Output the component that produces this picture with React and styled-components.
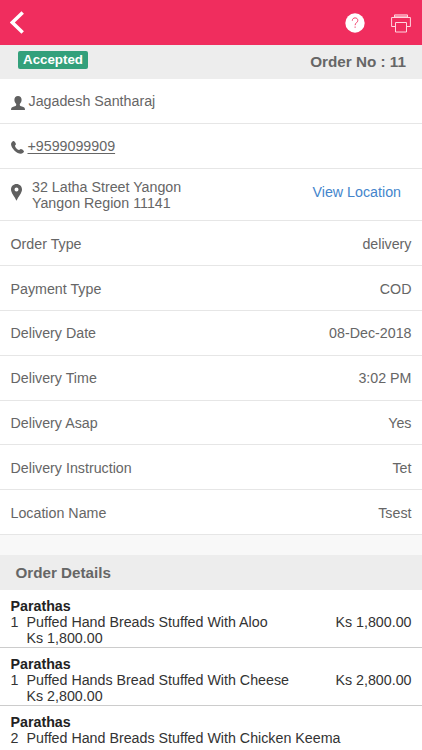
import React from "react";
import styled, { createGlobalStyle } from "styled-components";

const info = [
  ["Order Type", "delivery"],
  ["Payment Type", "COD"],
  ["Delivery Date", "08-Dec-2018"],
  ["Delivery Time", "3:02 PM"],
  ["Delivery Asap", "Yes"],
  ["Delivery Instruction", "Tet"],
  ["Location Name", "Tsest"],
];

const items = [
  { group: "Parathas", qty: 1, name: "Puffed Hand Breads Stuffed With Aloo", price: "Ks 1,800.00" },
  { group: "Parathas", qty: 1, name: "Puffed Hands Bread Stuffed With Cheese", price: "Ks 2,800.00" },
  { group: "Parathas", qty: 2, name: "Puffed Hand Breads Stuffed With Chicken Keema" },
];

const App = () => {
  return (
    <Container>
      <GlobalStyle />
      <Header>
        <BackIcon viewBox="0 0 14 24">
          <path d="M12.7 1.4L2.3 11.5l10.4 10.1" />
        </BackIcon>
        <Actions>
          <HelpIcon viewBox="0 0 20 20">
            <circle cx="10" cy="10" r="9.7" />
            <path d="M7.3 7.7c0-1.8 1.2-2.8 2.8-2.8s2.7 1 2.7 2.5c0 2.3-2.7 2.4-2.7 4.8" />
            <path d="M10.1 13.5v1.3" />
          </HelpIcon>
          <PrintIcon viewBox="0 0 20 19">
            <path d="M3.5 3.5V.9h13v2.6M3.5 2.2h13" />
            <path d="M4.5 12.5H.6v-9h18.8v9h-3.9" />
            <path d="M4.5 8.5h11V18h-11z" />
          </PrintIcon>
        </Actions>
      </Header>
      <StatusBar>
        <Badge>Accepted</Badge>
        <OrderNo>Order No : 11</OrderNo>
      </StatusBar>
      <Row $height={44.8}>
        <UserIcon viewBox="0 0 14 14">
          <path d="M7 0c2.200 0 3.600 1.400 3.600 3.700 0 1.700-.6 3.200-1.800 4.200v1c0 .8.9 1.100 2.200 1.500 2 .6 3 1.100 3 3.600H0c0-2.500 1-3 3-3.600 1.300-.4 2.200-.7 2.200-1.500v-1C4 6.900 3.400 5.400 3.400 3.700 3.400 1.400 4.800 0 7 0z" />
        </UserIcon>
        <span>Jagadesh Santharaj</span>
      </Row>
      <Row $height={44.8}>
        <PhoneIcon viewBox="0 0 13 13">
          <path d="M1 1C1.800.2 2.600-.1 3.100.3c.9.7 1.600 1.900 1.800 2.800.1.800-1 1.100-.9 1.800.3 1.500 2.300 3.600 3.900 4 .8.2 1.200-.9 2-.8.9.1 2.200.9 2.900 1.800.5.700-.1 1.500-1 2.200-1.700 1.500-5.400.4-8.200-2.300C.7 6.800-1.200 3.200 1 1z" />
        </PhoneIcon>
        <Phone href="#">+9599099909</Phone>
      </Row>
      <Row $height={52.8}>
        <PinIcon viewBox="0 0 11 17">
          <path d="M5.500 0C8.600 0 11 2.400 11 5.400c0 3.400-3.500 6.800-5.500 11.300C3.500 12.200 0 8.800 0 5.400 0 2.400 2.400 0 5.500 0zm0 3.500a2 2 0 1 0 0 4 2 2 0 1 0 0-4z" />
        </PinIcon>
        <div>
          32 Latha Street Yangon
          <br />
          Yangon Region 11141
        </div>
        <MapLink href="#">View Location</MapLink>
      </Row>
      {info.map(([label, value]) => (
        <Row key={label} $height={44.8}>
          <span>{label}</span>
          <Value>{value}</Value>
        </Row>
      ))}
      <SectionTitle>Order Details</SectionTitle>
      {items.map((item) => (
        <Item key={item.name}>
          <h4>{item.group}</h4>
          <ItemLine>
            <Qty>{item.qty}</Qty>
            <span>{item.name}</span>
            <Value>{item.price}</Value>
          </ItemLine>
          <UnitPrice>{item.price}</UnitPrice>
        </Item>
      ))}
    </Container>
  );
};

const GlobalStyle = createGlobalStyle`
  * {
    box-sizing: border-box;
  }
  body {
    margin: 0;
    overflow: hidden;
  }
`;
const Container = styled.div`
  width: 100%;
  height: 750px;
  overflow: hidden;
  background-color: #f8f8f8;
  color: #666;
  font-family: "Liberation Sans", Arial, sans-serif;
  font-size: 14.25px;
  line-height: 16px;
`;
const Header = styled.header`
  display: flex;
  justify-content: space-between;
  height: 45px;
  padding: 11px 11px 0 9.5px;
  background-color: #f02d5e;
`;
const Actions = styled.div`
  display: flex;
  gap: 26px;
  padding-top: 2px;
`;
const BackIcon = styled.svg`
  width: 14px;
  height: 24px;
  fill: none;
  stroke: #fff;
  stroke-width: 3.5;
`;
const HelpIcon = styled.svg`
  width: 20px;
  height: 20px;
  fill: none;
  stroke: #f02d5e;
  stroke-width: 0.9;
  circle {
    fill: #fff;
    stroke: none;
  }
`;
const PrintIcon = styled.svg`
  width: 20px;
  height: 19px;
  margin-top: 0.5px;
  fill: #f02d5e;
  stroke: #ffd5df;
  stroke-width: 1;
`;
const StatusBar = styled.div`
  display: flex;
  align-items: flex-start;
  justify-content: space-between;
  height: 34px;
  padding: 6px 16px 0 18px;
  background-color: #ededed;
`;
const Badge = styled.span`
  width: 70px;
  height: 18px;
  border-radius: 2px;
  background-color: #33a07b;
  color: #fff;
  font-size: 13.3px;
  font-weight: bold;
  line-height: 18px;
  text-align: center;
`;
const OrderNo = styled.strong`
  padding-top: 3px;
  font-size: 15.25px;
`;
const Row = styled.div`
  display: flex;
  align-items: center;
  height: ${({ $height }) => $height}px;
  padding: 1px 10.5px 0;
  border-bottom: 1px solid #e6e6e6;
  background-color: #fff;
`;
const Value = styled.span`
  margin-left: auto;
`;
const UserIcon = styled.svg`
  width: 14px;
  height: 14px;
  margin: 4px 4px 0 0;
  fill: #606060;
`;
const PhoneIcon = styled.svg`
  width: 13px;
  height: 13px;
  margin: 3px 4px 0 0;
  fill: #606060;
`;
const Phone = styled.a`
  color: #666;
  text-underline-offset: 2px;
`;
const PinIcon = styled.svg`
  width: 11px;
  height: 17px;
  margin: 0 10.5px 4px 0;
  fill: #606060;
  fill-rule: evenodd;
`;
const MapLink = styled.a`
  margin: 0 10.5px 6px auto;
  color: #4485cc;
  text-decoration: none;
`;
const SectionTitle = styled.h3`
  height: 34.6px;
  margin: 20.4px 0 0;
  padding: 0 15.5px;
  background-color: #ededed;
  font-size: 15.2px;
  line-height: 35px;
`;
const Item = styled.div`
  height: 58px;
  padding: 8.4px 10.5px 0;
  border-bottom: 1px solid #ccc;
  background-color: #fff;
  color: #333;
  h4 {
    margin: 0;
    color: #222;
    font-size: 14.25px;
  }
`;
const ItemLine = styled.div`
  display: flex;
`;
const Qty = styled.span`
  width: 16px;
`;
const UnitPrice = styled.div`
  padding-left: 16px;
`;

export default App;
